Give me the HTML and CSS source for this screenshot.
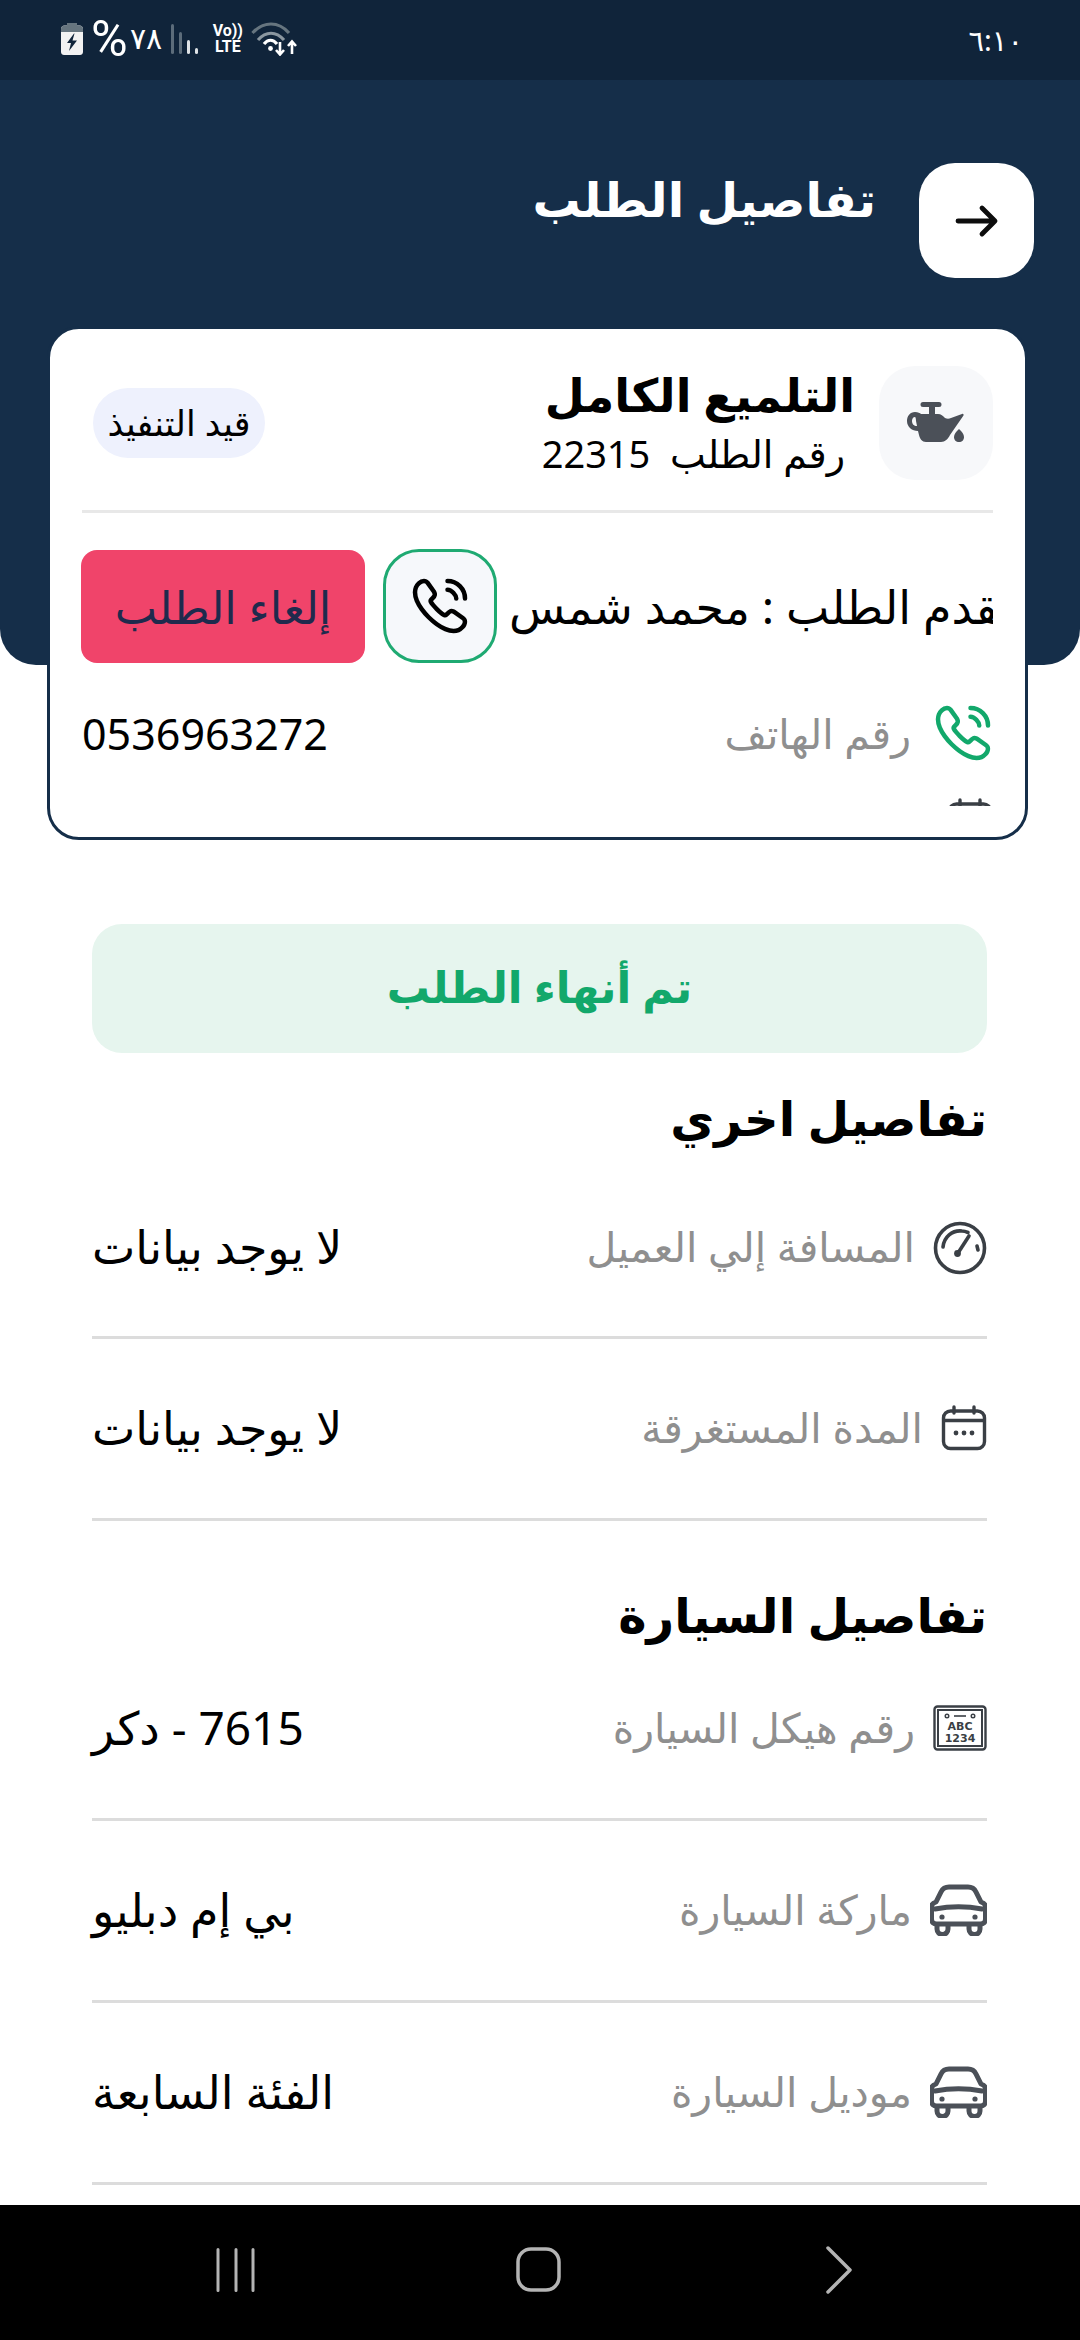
FILE: index.html
```html
<!DOCTYPE html>
<html lang="ar" dir="rtl">
<head>
  <meta charset="UTF-8">
  <title>تفاصيل الطلب</title>
  <meta name="viewport" content="width=device-width, initial-scale=1.0">
  <link rel="stylesheet" href="styles.css">
</head>
<body>
  <svg class="defs" width="0" height="0" aria-hidden="true">
    <symbol id="phone" viewBox="0 0 24 24">
      <path fill="none" stroke="currentColor" stroke-width="1.800" stroke-miterlimit="10" d="M21.97 18.33c0 .36-.08.73-.25 1.09-.17.36-.39.7-.68 1.02-.49.54-1.03.93-1.64 1.18-.6.25-1.25.38-1.95.38-1.02 0-2.11-.24-3.26-.73s-2.3-1.15-3.44-1.98a28.75 28.75 0 0 1-3.28-2.8 28.414 28.414 0 0 1-2.79-3.27c-.82-1.14-1.48-2.28-1.96-3.41C2.24 8.67 2 7.58 2 6.54c0-.68.12-1.33.36-1.93.24-.61.62-1.17 1.15-1.67C4.15 2.31 4.85 2 5.59 2c.28 0 .56.06.81.18.26.12.49.3.67.56l2.32 3.27c.18.25.31.48.4.7.09.21.14.42.14.61 0 .24-.07.48-.21.71-.13.23-.32.47-.56.71l-.76.79c-.11.11-.16.24-.16.4 0 .08.01.15.03.23.03.08.06.14.08.2.18.33.49.76.93 1.28.45.52.93 1.05 1.45 1.58.54.53 1.06 1.02 1.59 1.47.52.44.95.74 1.29.92.05.02.11.05.18.08.08.03.16.04.25.04.17 0 .3-.06.41-.17l.76-.75c.25-.25.49-.44.72-.56.23-.14.46-.21.71-.21.19 0 .39.04.61.13.22.09.45.22.7.39l3.31 2.35c.26.18.44.39.55.64.1.25.16.5.16.78Z"/>
      <path fill="none" stroke="currentColor" stroke-width="1.800" stroke-linecap="round" d="M18.5 9c0-.6-.47-1.52-1.17-2.27-.64-.69-1.49-1.23-2.33-1.23M22 9c0-3.87-3.13-7-7-7"/>
    </symbol>
    <symbol id="car" viewBox="0 0 57 52">
      <path fill="none" stroke="currentColor" stroke-width="5" stroke-linejoin="round" d="M19 3h19c4 0 6 1 8 5l5 10c3 1 4.500 2 4.500 5v12c0 3-2 5-5 5H6.500c-3 0-5-2-5-5V23c0-3 1.500-4 4.500-5l5-10c2-4 4-5 8-5Z"/>
      <path fill="none" stroke="currentColor" stroke-width="5" stroke-linecap="round" d="M5 25c16-3 31-3 47 0"/>
      <circle cx="12" cy="33" r="2.600" fill="currentColor"/>
      <circle cx="45" cy="33" r="2.600" fill="currentColor"/>
      <path fill="none" stroke="currentColor" stroke-width="5" d="M7 41v4a5.500 5.500 0 0 0 11 0v-4M39 41v4a5.500 5.500 0 0 0 11 0v-4"/>
    </symbol>
    <symbol id="calendar" viewBox="0 0 46 46">
      <rect x="2.500" y="6" width="41" height="37.500" rx="7" fill="none" stroke="currentColor" stroke-width="3.400"/>
      <path fill="none" stroke="currentColor" stroke-width="3.400" stroke-linecap="round" d="M13 2v6M33 2v6M3 15.500h40"/>
      <circle cx="15" cy="28" r="2.400" fill="currentColor"/>
      <circle cx="23" cy="28" r="2.400" fill="currentColor"/>
      <circle cx="31" cy="28" r="2.400" fill="currentColor"/>
    </symbol>
  </svg>

  <div class="screen">
    <div class="statusbar">
      <div class="status-time">٦:١٠</div>
      <div class="status-icons">
        <svg class="ic-wifi" width="46" height="34" viewBox="0 0 46 34">
          <path fill="none" stroke="#66757f" stroke-width="3.200" d="M1.500 11c11-12 26-12 36.500 0"/>
          <path fill="none" stroke="#8b97a0" stroke-width="3.200" d="M7 18c8-9 18-9 26 0"/>
          <path fill="none" stroke="#fff" stroke-width="3.200" d="M13 22c4-5 9-5 13 0"/>
          <circle cx="19.500" cy="26.500" r="2.400" fill="#fff"/>
          <path fill="none" stroke="#fff" stroke-width="2.600" d="M29 20v12M25 28l4 4.500 4-4.500M41 32V20M37 24l4-4.500 4 4.500"/>
        </svg>
        <div class="volte"><span>Vo))</span><span>LTE</span></div>
        <svg class="ic-signal" width="28" height="30" viewBox="0 0 28 30">
          <rect x="0" y="0" width="3" height="30" rx="1.500" fill="#5c6c7a"/>
          <rect x="8" y="8" width="3" height="22" rx="1.500" fill="#5c6c7a"/>
          <rect x="16" y="16" width="3" height="14" rx="1.500" fill="#dfe3e6"/>
          <rect x="24" y="24" width="3" height="6" rx="1.500" fill="#dfe3e6"/>
        </svg>
        <div class="status-pct"><span class="pct-num">٧٨</span><span class="pct-sign">%</span></div>
        <svg class="ic-battery" width="22" height="32" viewBox="0 0 22 32">
          <path fill="#f2f2f2" d="M6 0h10v2.500h2.500c2 0 3.500 1.500 3.500 3.500v23c0 2-1.500 3-3 3H3c-1.500 0-3-1-3-3V6c0-2 1.500-3.500 3.500-3.500H6Z"/>
          <path fill="#66757f" d="M6 0h10v2.500h2.500c2 0 3.500 1.500 3.500 3.500v3H0V6c0-2 1.500-3.500 3.500-3.500H6Z"/>
          <path fill="#10243a" d="M13 10.500 6 20h4l-2 8 8-10.500h-4.500l2-7Z"/>
        </svg>
      </div>
    </div>

    <div class="content">
      <header class="hero">
        <button class="back-btn" aria-label="رجوع">
          <svg width="44" height="44" viewBox="0 0 44 44">
            <path fill="none" stroke="#0d0d0d" stroke-width="4.800" stroke-linecap="round" stroke-linejoin="round" d="M3 22h36M27 9l13 13-13 13"/>
          </svg>
        </button>
        <h1>تفاصيل الطلب</h1>
      </header>

      <section class="card">
        <div class="card-scroll">
          <div class="card-top">
            <div class="service-icon">
              <svg width="58" height="41" viewBox="0 0 58 41">
                <path fill="#4b5058" fill-rule="evenodd" d="M16 0h16a2.500 2.500 0 0 1 0 5h-4v7h3c3 0 5 2 7 4 2 1 4 1 6 0l11-4c1-.5 2 .5 1.500 1.500L43 33c-2 4-5 7-9 7H19c-4 0-6-3-7-7l-1-4c-6 0-11-4-11-10 0-5 3-9 8-9 3 0 5 1 6 2h8V5h-6a2.500 2.500 0 0 1 0-5ZM8 15c-2 0-3 2-3 4 0 3 2 5 5 5l-1-5c0-2-.5-4-1-4Z"/>
                <path fill="#4b5058" d="M52 27c3 3 5 5 5 8 0 3-2 5-5 5s-5-2-5-5c0-3 2-5 5-8Z"/>
              </svg>
            </div>
            <div class="service-info">
              <div class="service-name">التلميع الكامل</div>
              <div class="service-num">رقم الطلب&nbsp; <span dir="ltr">22315</span></div>
            </div>
            <div class="badge">قيد التنفيذ</div>
          </div>

          <div class="card-actions">
            <div class="requester">مقدم الطلب : محمد شمس</div>
            <button class="call-btn" aria-label="اتصال">
              <svg width="60" height="60"><use href="#phone"/></svg>
            </button>
            <button class="cancel-btn">إلغاء الطلب</button>
          </div>

          <div class="card-row">
            <svg class="phone-green" width="60" height="60"><use href="#phone"/></svg>
            <span class="label">رقم الهاتف</span>
            <span class="value phone-num">0536963272</span>
          </div>
          <div class="card-row next-row">
            <svg class="row-icon" width="46" height="46"><use href="#calendar"/></svg>
            <span class="label">تاريخ الطلب</span>
            <span class="value phone-num">2024/05/12</span>
          </div>
        </div>
      </section>

      <main class="details">
        <div class="done-banner">تم أنهاء الطلب</div>

        <h2 class="section-title first">تفاصيل اخري</h2>
        <div class="row">
          <svg class="row-icon" width="54" height="54" viewBox="0 0 54 54">
            <circle cx="27" cy="27" r="24.500" fill="none" stroke="currentColor" stroke-width="3.600"/>
            <path fill="none" stroke="currentColor" stroke-width="3.600" stroke-linecap="round" d="M10 26c1-10 9-17 19-16 2 0 4 .6 6 1.500M44 25l1 4"/>
            <path fill="none" stroke="currentColor" stroke-width="3.600" stroke-linecap="round" d="M25 32l11-17"/>
            <circle cx="24.500" cy="32.500" r="3.400" fill="currentColor"/>
          </svg>
          <span class="label">المسافة إلي العميل</span>
          <span class="value">لا يوجد بيانات</span>
        </div>
        <div class="row">
          <svg class="row-icon" width="46" height="46"><use href="#calendar"/></svg>
          <span class="label">المدة المستغرقة</span>
          <span class="value">لا يوجد بيانات</span>
        </div>

        <h2 class="section-title">تفاصيل السيارة</h2>
        <div class="row">
          <svg class="row-icon" width="54" height="46" viewBox="0 0 54 46">
            <rect x="1.500" y="1.500" width="51" height="43" rx="3" fill="none" stroke="currentColor" stroke-width="2.400"/>
            <rect x="5" y="5" width="44" height="36" fill="none" stroke="currentColor" stroke-width="2"/>
            <circle cx="14" cy="11" r="1.800" fill="none" stroke="currentColor" stroke-width="1.400"/>
            <circle cx="40" cy="11" r="1.800" fill="none" stroke="currentColor" stroke-width="1.400"/>
            <path stroke="currentColor" stroke-width="1.600" d="M21 11h12"/>
            <text class="plate-text" x="27" y="25">ABC</text>
            <text class="plate-text" x="27" y="37">1234</text>
          </svg>
          <span class="label">رقم هيكل السيارة</span>
          <span class="value">7615 - دكر</span>
        </div>
        <div class="row">
          <svg class="row-icon car-icon" width="57" height="52"><use href="#car"/></svg>
          <span class="label">ماركة السيارة</span>
          <span class="value">بي إم دبليو</span>
        </div>
        <div class="row">
          <svg class="row-icon car-icon" width="57" height="52"><use href="#car"/></svg>
          <span class="label">موديل السيارة</span>
          <span class="value">الفئة السابعة</span>
        </div>
      </main>
    </div>

    <nav class="navbar" dir="ltr">
      <svg width="40" height="44" viewBox="0 0 40 44">
        <path stroke="#b4b4b4" stroke-width="3" stroke-linecap="round" d="M2 1.500v41M20 1.500v41M37 1.500v41"/>
      </svg>
      <svg class="nav-home" width="46" height="46" viewBox="0 0 46 46">
        <rect x="2" y="2" width="41" height="41" rx="13" fill="none" stroke="#b4b4b4" stroke-width="3.500"/>
      </svg>
      <svg width="28" height="48" viewBox="0 0 28 48">
        <path fill="none" stroke="#b4b4b4" stroke-width="3.500" stroke-linecap="round" stroke-linejoin="round" d="M3 2l22 22L3 46"/>
      </svg>
    </nav>
  </div>
</body>
</html>
```

FILE: styles.css
```css
* {
  box-sizing: border-box;
}

body {
  margin: 0;
  background: #fff;
  font-family: "Noto Sans", "DejaVu Sans", sans-serif;
  color: #000;
}

.defs {
  position: absolute;
}

button {
  border: none;
  padding: 0;
  font-family: inherit;
}

.screen {
  width: 1080px;
  height: 2340px;
  display: flex;
  flex-direction: column;
  overflow: hidden;
}

/* Status bar */
.statusbar {
  height: 80px;
  flex: none;
  background: #10243a;
  color: #fff;
  display: flex;
  justify-content: space-between;
  align-items: center;
  padding: 0 57px 2px 61px;
}

.status-time {
  font-size: 29px;
}

.status-icons {
  display: flex;
  align-items: center;
  gap: 8px;
}

.ic-signal {
  margin: 0 6px 0 1px;
}

.volte {
  display: flex;
  flex-direction: column;
  font-family: Roboto, sans-serif;
  font-size: 16px;
  font-weight: 700;
  line-height: 16px;
  direction: ltr;
  text-align: center;
}

.status-pct {
  display: flex;
  direction: rtl;
  align-items: center;
  gap: 2px;
  font-family: Roboto, sans-serif;
}

.pct-sign {
  font-size: 50px;
  line-height: 46px;
}

.pct-num {
  font-size: 30px;
  line-height: 46px;
}

/* Header */
.content {
  flex: 1;
  overflow: hidden;
}

.hero {
  height: 585px;
  background: #152e49;
  border-radius: 0 0 36px 36px;
  padding: 83px 46px 0 0;
  display: flex;
  align-items: flex-start;
  gap: 43px;
}

.hero h1 {
  margin: 0;
  color: #fff;
  font-size: 48px;
  font-weight: 700;
  line-height: 72px;
}

.back-btn {
  width: 115px;
  height: 115px;
  background: #fff;
  border-radius: 36px;
  display: flex;
  align-items: center;
  justify-content: center;
}

/* Order card */
.card {
  width: 981px;
  height: 514px;
  margin: -339px 52px 0 47px;
  position: relative;
  background: #fff;
  border: 3px solid #152e49;
  border-radius: 32px;
  padding-top: 36px;
}

.card-scroll {
  height: 441px;
  overflow: hidden;
  padding: 0 32px;
}

.card-top {
  display: flex;
  align-items: center;
  gap: 24px;
  height: 148px;
  padding-bottom: 30px;
  border-bottom: 3px solid #e8e8e8;
}

.service-icon {
  width: 114px;
  height: 114px;
  flex: none;
  background: #f7f8fa;
  border-radius: 36px;
  display: flex;
  align-items: center;
  justify-content: center;
}

.service-info {
  flex: 1;
  padding-top: 1px;
}

.service-name {
  font-size: 46px;
  font-weight: 700;
  line-height: 60px;
}

.service-num {
  font-size: 38px;
  line-height: 58px;
  padding-right: 10px;
}

.badge {
  width: 172px;
  height: 70px;
  margin-left: 11px;
  flex: none;
  background: #eef1fd;
  border-radius: 35px;
  font-size: 35px;
  display: flex;
  align-items: center;
  justify-content: center;
  white-space: nowrap;
}

.card-actions {
  display: flex;
  align-items: center;
  gap: 12px;
  margin-top: 36px;
}

.requester {
  width: 484px;
  flex: none;
  overflow: hidden;
  white-space: nowrap;
  font-size: 46px;
  direction: ltr;
  text-align: left;
}

.call-btn {
  width: 114px;
  height: 114px;
  flex: none;
  background: #f6f8fb;
  border: 3px solid #1faa72;
  border-radius: 36px;
  display: flex;
  align-items: center;
  justify-content: center;
  color: #000;
}

.cancel-btn {
  width: 284px;
  height: 113px;
  margin-right: 6px;
  flex: none;
  background: #f0446a;
  border-radius: 16px;
  color: #1f2a4d;
  font-size: 45px;
}

.card-row {
  display: flex;
  align-items: center;
  gap: 22px;
  height: 60px;
  margin-top: 40px;
}

.next-row {
  margin-top: 28px;
}

.phone-green {
  color: #12a86b;
}

.label {
  flex: 1;
  color: #8f8f8f;
  font-size: 41px;
}

.value {
  font-size: 46px;
  color: #000;
}

.phone-num {
  font-size: 43px;
}

.row-icon {
  color: #3a3f45;
  flex: none;
}

.row .row-icon {
  margin-top: 3px;
}

.car-icon {
  color: #4b5058;
}

/* Details list */
.details {
  padding: 84px 93px 0 92px;
}

.done-banner {
  height: 129px;
  padding-bottom: 4px;
  background: #e6f5ee;
  border-radius: 30px;
  color: #12a86b;
  font-size: 43px;
  font-weight: 700;
  display: flex;
  align-items: center;
  justify-content: center;
}

.section-title {
  margin: 0 0 -16px;
  font-size: 48px;
  font-weight: 700;
  line-height: 80px;
  padding-top: 54px;
}

.section-title.first {
  margin-bottom: 0;
  padding: 25px 0 2px;
}

.row {
  height: 182px;
  display: flex;
  align-items: center;
  gap: 18px;
  border-bottom: 3px solid #dcdcdc;
  padding-bottom: 4px;
}

.first + .row {
  height: 179px;
}

.plate-text {
  font-family: "DejaVu Sans", sans-serif;
  font-size: 11px;
  font-weight: 700;
  text-anchor: middle;
  fill: currentColor;
}

/* Android nav */
.navbar {
  height: 135px;
  flex: none;
  background: #000;
  display: flex;
  align-items: center;
  gap: 260px;
  padding: 0 0 6px 216px;
}

.nav-home {
  margin-right: 3px;
}
```
